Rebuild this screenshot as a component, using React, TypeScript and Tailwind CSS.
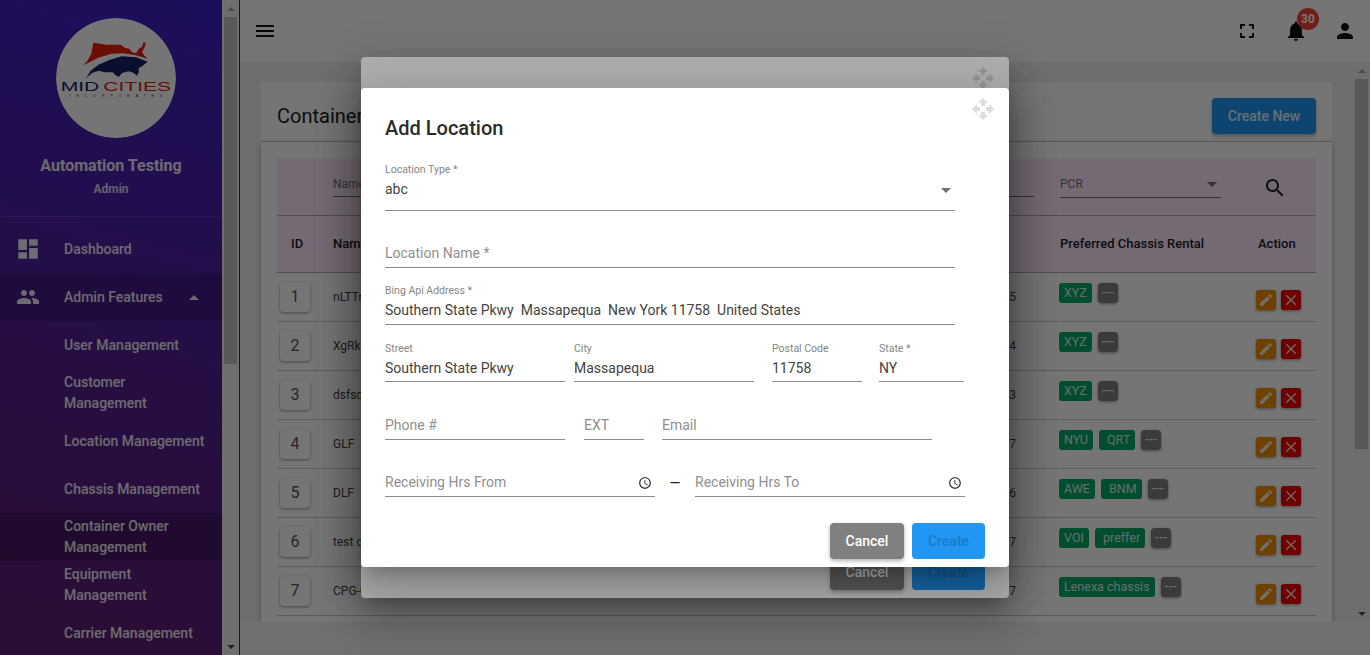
import type { ReactNode } from "react";

const icons = {
  menu: "M3 18h18v-2H3v2zm0-5h18v-2H3v2zm0-7v2h18V6H3z",
  fullscreen: "M7 14H5v5h5v-2H7v-3zm-2-4h2V7h3V5H5v5zm12 7h-3v2h5v-5h-2v3zM14 5v2h3v3h2V5h-5z",
  bell: "M12 22c1.1 0 2-.9 2-2h-4c0 1.1.89 2 2 2zm6-6v-5c0-3.07-1.64-5.64-4.5-6.32V4c0-.83-.67-1.5-1.5-1.5s-1.5.67-1.5 1.5v.68C7.63 5.36 6 7.92 6 11v5l-2 2v1h16v-1l-2-2z",
  person: "M12 12c2.21 0 4-1.79 4-4s-1.79-4-4-4-4 1.79-4 4 1.79 4 4 4zm0 2c-2.67 0-8 1.34-8 4v2h16v-2c0-2.66-5.33-4-8-4z",
  dashboard: "M3 13h8V3H3v10zm0 8h8v-6H3v6zm10 0h8V11h-8v10zm0-18v6h8V3h-8z",
  people: "M16 11c1.66 0 2.99-1.34 2.99-3S17.66 5 16 5c-1.66 0-3 1.34-3 3s1.34 3 3 3zm-8 0c1.66 0 2.99-1.34 2.99-3S9.66 5 8 5C6.34 5 5 6.34 5 8s1.34 3 3 3zm0 2c-2.33 0-7 1.17-7 3.5V19h14v-2.5c0-2.33-4.67-3.5-7-3.5zm8 0c-.29 0-.62.02-.97.05 1.16.84 1.97 1.97 1.97 3.45V19h6v-2.5c0-2.33-4.67-3.5-7-3.5z",
  search: "M15.5 14h-.79l-.28-.27C15.41 12.59 16 11.11 16 9.5 16 5.91 13.09 3 9.5 3S3 5.91 3 9.5 5.91 16 9.5 16c1.61 0 3.09-.59 4.23-1.57l.27.28v.79l5 4.99L20.49 19l-4.99-5zm-6 0C7.01 14 5 11.99 5 9.5S7.01 5 9.5 5 14 7.01 14 9.5 11.99 14 9.5 14z",
  edit: "M3 17.25V21h3.75L17.81 9.94l-3.75-3.75L3 17.25zM20.71 7.04c.39-.39.39-1.02 0-1.41l-2.34-2.34c-.39-.39-1.02-.39-1.41 0l-1.83 1.83 3.75 3.75 1.83-1.83z",
  close: "M19 6.41L17.59 5 12 10.59 6.41 5 5 6.41 10.59 12 5 17.59 6.41 19 12 13.41 17.59 19 19 17.59 13.41 12z",
  clock: "M11.99 2C6.47 2 2 6.48 2 12s4.47 10 9.99 10C17.52 22 22 17.52 22 12S17.52 2 11.99 2zM12 20c-4.42 0-8-3.58-8-8s3.58-8 8-8 8 3.58 8 8-3.58 8-8 8zm.5-13H11v6l5.25 3.15.75-1.23-4.5-2.67z",
  move: "M10 9h4V6h3l-5-5-5 5h3v3zm-1 1H6V7l-5 5 5 5v-3h3v-4zm14 2l-5-5v3h-3v4h3v3l5-5zm-9 3h-4v3H7l5 5 5-5h-3v-3z",
};

function Icon({ name, className }: { name: keyof typeof icons; className?: string }) {
  return (
    <svg viewBox="0 0 24 24" className={className} fill="currentColor">
      <path d={icons[name]} />
    </svg>
  );
}

function Logo() {
  return (
    <svg viewBox="78 25 360 360" className="h-[120px] w-[120px]">
      <circle cx="258" cy="205" r="180" fill="#fff" />
      <path
        d="M190 99 L230 105 L272 105 L284 114 L298 117 L306 128 L318 131 L328 116 L336 112 L341 97 L347 100 L344 112 L336 128 L342 136 L353 147 L318 137 L280 131 L245 132 L205 144 L160 167 L172 153 L184 132 Z"
        fill="#e8200f"
      />
      <path
        d="M353 156 L318 143 L275 140 L240 150 L205 165 L182 183 L168 206 L186 190 L206 183 L224 188 L248 188 L256 196 L266 202 L276 190 L296 185 L312 190 L320 198 L326 190 L326 176 L338 168 Z"
        fill="#1a2368"
      />
      <text x="92" y="243" fontFamily="'Liberation Sans', sans-serif" fontSize="40" textLength="116" lengthAdjust="spacingAndGlyphs" fill="#1a2368">
        MID
      </text>
      <text x="220" y="243" fontFamily="'Liberation Sans', sans-serif" fontSize="40" textLength="203" lengthAdjust="spacingAndGlyphs" fill="#e8200f">
        CITIES
      </text>
      <text x="118" y="261" fontFamily="'Liberation Sans', sans-serif" fontSize="12" textLength="280" fill="#444">
        INCORPORATED
      </text>
    </svg>
  );
}

function NavItem({ children, active }: { children: ReactNode; active?: boolean }) {
  return (
    <div className={`flex h-12 shrink-0 items-center pl-16 pr-4 text-sm font-medium leading-[21px] text-white/90 ${active ? "bg-black/20" : ""}`}>
      <span>{children}</span>
    </div>
  );
}

function Sidebar() {
  return (
    <aside className="flex h-full w-[222px] shrink-0 flex-col overflow-hidden bg-[linear-gradient(15deg,#5e1f70_0%,#561f90_40%,#4120c8_100%)]">
      <div className="flex h-[217px] shrink-0 flex-col items-center border-b border-white/10 pt-[18px]">
        <div className="ml-[10px] overflow-hidden rounded-full">
          <Logo />
        </div>
        <div className="mt-[17px] text-base font-bold leading-[22px] text-white/90">Automation Testing</div>
        <div className="mt-[4px] text-xs font-bold leading-4 text-white/80">Admin</div>
      </div>
      <div className="flex h-[56px] shrink-0 items-center pl-[15px] pt-2 text-sm font-medium text-white/90">
        <Icon name="dashboard" className="h-[26px] w-[26px]" />
        <span className="ml-[23px]">Dashboard</span>
      </div>
      <div className="flex h-12 shrink-0 items-center bg-black/15 pl-4 text-sm font-medium text-white/90">
        <Icon name="people" className="h-6 w-6" />
        <span className="ml-6">Admin Features</span>
        <span className="ml-[26px] h-0 w-0 border-x-[5px] border-b-[5px] border-x-transparent border-b-white/90" />
      </div>
      <NavItem>User Management</NavItem>
      <NavItem>Customer Management</NavItem>
      <NavItem>Location Management</NavItem>
      <NavItem>Chassis Management</NavItem>
      <NavItem active>Container Owner Management</NavItem>
      <NavItem>Equipment Management</NavItem>
      <NavItem>Carrier Management</NavItem>
    </aside>
  );
}

function Scrollbar({ thumb }: { thumb: string }) {
  return (
    <div className="flex h-full w-[17px] shrink-0 flex-col bg-[#f1f1f1]">
      <div className="flex h-[17px] shrink-0 items-center justify-center">
        <span className="h-0 w-0 border-x-[4px] border-b-[4px] border-x-transparent border-b-[#a3a3a3]" />
      </div>
      <div className={`mx-[2px] shrink-0 bg-[#c1c1c1] ${thumb}`} />
      <div className="flex-1" />
      <div className="flex h-[17px] shrink-0 items-center justify-center">
        <span className="h-0 w-0 border-x-[4px] border-t-[4px] border-x-transparent border-t-[#505050]" />
      </div>
    </div>
  );
}

function Tag({ children }: { children: ReactNode }) {
  return (
    <span className="flex h-5 items-center whitespace-pre rounded-[3px] bg-[#00a86b] px-[5px] text-[12.5px] text-white/85">
      {children}
    </span>
  );
}

const rows = [
  { id: 1, name: "nLTTrq", code: "10025", tags: ["XYZ"] },
  { id: 2, name: "XgRkmz", code: "10024", tags: ["XYZ"] },
  { id: 3, name: "dsfsdf", code: "10023", tags: ["XYZ"] },
  { id: 4, name: "GLF", code: "10017", tags: ["NYU", "\u00a0QRT"] },
  { id: 5, name: "DLF", code: "10016", tags: ["AWE", "\u00a0BNM"] },
  { id: 6, name: "test chassis", code: "10007", tags: ["VOI", "\u00a0preffer"] },
  { id: 7, name: "CPG-Chicago", code: "10007", tags: ["Lenexa chassis"] },
];

const columns = "grid grid-cols-[56px_300px_383px_224px_76px]";

function Table() {
  return (
    <div className="flex-1 bg-white px-4 pt-[17px] shadow-[0_2px_6px_rgba(0,0,0,0.25)]">
      <div className="bg-[#fbe6fd]">
        <div className="flex h-[57px] items-start border-b border-[#b9a9bb] pl-14 pt-4">
          <div className="h-[22px] w-[220px] border-b border-[#7b6a7d] text-xs leading-[18px] text-[#7b6f7d]">Name</div>
          <div className="ml-[261px] h-[22px] w-[220px] border-b border-[#7b6a7d]" />
          <div className="ml-[26px] flex h-[23px] w-[161px] items-center justify-between border-b border-[#7b6a7d] pb-1 pr-[4px] text-xs text-[#7b6f7d]">
            <span>PCR</span>
            <span className="h-0 w-0 border-x-[5px] border-t-[5px] border-x-transparent border-t-[#6f6f6f]" />
          </div>
          <Icon name="search" className="ml-[42px] mt-px h-6 w-6 text-[#222]" />
        </div>
        <div className={`${columns} h-[57px] items-center border-b border-[#b9a9bb] text-[13px] font-medium text-[#1f1f1f]`}>
          <span className="pl-[14px]">ID</span>
          <span>Name</span>
          <span>Code</span>
          <span className="pl-[44px]">Preferred Chassis Rental</span>
          <span className="pl-[18px]">Action</span>
        </div>
      </div>
      {rows.map((row) => (
        <div key={row.id} className={`${columns} h-[49px] border-b border-[#c9c9c9] text-xs text-[#444]`}>
          <div className="pl-[3px] pt-[9px]">
            <span className="flex h-[30px] w-[30px] items-center justify-center rounded bg-white text-base text-[#555] shadow-[0_1px_3px_rgba(0,0,0,0.4)]">
              {row.id}
            </span>
          </div>
          <div className="flex items-center">{row.name}</div>
          <div className="flex items-center justify-end">{row.code}</div>
          <div className="flex gap-[6px] pl-[43px] pt-[10px]">
            {row.tags.map((tag) => (
              <Tag key={tag}>{tag}</Tag>
            ))}
            <span className="flex h-5 w-5 items-center justify-center rounded-[4px] bg-[#808080] text-xs font-medium text-white/85 shadow-[0_1px_3px_rgba(0,0,0,0.4)]">
              ---
            </span>
          </div>
          <div className="flex gap-[5px] pl-4 pt-[17px]">
            <span className="flex h-5 w-5 items-center justify-center rounded-[3px] bg-[#f09000] text-white/85 shadow-[0_1px_3px_rgba(0,0,0,0.4)]">
              <Icon name="edit" className="h-4 w-4" />
            </span>
            <span className="flex h-5 w-5 items-center justify-center rounded-[3px] bg-[#f00000] text-white/85 shadow-[0_1px_3px_rgba(0,0,0,0.4)]">
              <Icon name="close" className="h-[18px] w-[18px]" />
            </span>
          </div>
        </div>
      ))}
    </div>
  );
}

function Field({ label, value, width, height = "h-[42px]", icon }: { label: string; value?: string; width: string; height?: string; icon?: ReactNode }) {
  return (
    <div className={`shrink-0 border-b border-[#8c8c8c] ${width} ${height}`}>
      <div className="h-[15px] pt-px text-[10.5px] leading-[14px] text-[#858585]">{value ? label : ""}</div>
      <div className={`flex h-[23px] items-center justify-between whitespace-pre text-sm ${value ? "text-[#444]" : "text-[#8f8f8f]"}`}>
        <span>{value ?? label}</span>
        {icon}
      </div>
    </div>
  );
}

function Clock() {
  return <Icon name="clock" className="mr-[3px] mt-[2px] h-[14px] w-[14px] text-[#222]" />;
}

function DialogButtons() {
  return (
    <div className="flex justify-end gap-2 pb-2 pr-6">
      <button className="h-9 w-[74px] rounded bg-[#808080] text-sm font-medium text-white shadow-[0_2px_4px_rgba(0,0,0,0.3)]">Cancel</button>
      <button className="h-9 w-[73px] rounded bg-[#2196f3] text-sm font-medium text-[#1a7cc8]">Create</button>
    </div>
  );
}

const dialogShadow = "shadow-[0_11px_15px_-7px_rgba(0,0,0,0.2),0_24px_38px_3px_rgba(0,0,0,0.14),0_9px_46px_8px_rgba(0,0,0,0.12)]";

function MoveHandle() {
  return <Icon name="move" className="absolute right-[14px] top-[9px] h-6 w-6 text-[#dcdcdc]" />;
}

export default function App() {
  return (
    <div className="relative flex h-[655px] w-[1370px] overflow-hidden bg-[#eef0f3] font-['Roboto',sans-serif]">
      <Sidebar />
      <div className="border-r border-[#333]">
        <Scrollbar thumb="h-[347px]" />
      </div>

      <div className="flex min-w-0 flex-1 flex-col">
        <header className="flex h-[62px] shrink-0 items-center bg-white pl-[13px] text-[#111]">
          <Icon name="menu" className="h-6 w-6" />
          <div className="flex-1" />
          <Icon name="fullscreen" className="h-6 w-6" />
          <div className="relative ml-[25px]">
            <Icon name="bell" className="h-6 w-6" />
            <span className="absolute left-[2px] top-[-22px] ml-[11px] mt-[11px] flex h-[22px] w-[22px] items-center justify-center rounded-full bg-[#f44336] text-xs font-bold text-white">
              30
            </span>
          </div>
          <Icon name="person" className="ml-[25px] mr-[13px] h-6 w-6" />
        </header>

        <div className="flex min-h-0 flex-1">
          <main className="flex min-w-0 flex-1 flex-col overflow-hidden px-[21px] pt-5">
            <div className="flex h-[60px] shrink-0 items-center justify-between border-b border-[#c9c9c9] bg-white px-4 pt-2">
              <h1 className="text-xl text-[#222]">Container Owner Management</h1>
              <button className="h-9 w-[104px] rounded bg-[#2196f3] text-sm font-medium text-white/85 shadow-[0_2px_4px_rgba(0,0,0,0.3)]">Create New</button>
            </div>
            <Table />
          </main>
          <Scrollbar thumb="h-[370px]" />
        </div>
        <div className="h-[33px] shrink-0 bg-[#f3f3f3]" />
      </div>

      <div className="absolute inset-0 bg-black/32" />
      <div className="absolute inset-0 flex items-center justify-center">
        <div className={`relative flex h-[541px] w-[648px] flex-col justify-end rounded bg-white ${dialogShadow}`}>
          <MoveHandle />
          <DialogButtons />
        </div>
      </div>

      <div className="absolute inset-0 bg-black/32" />
      <div className="absolute inset-0 flex items-center justify-center">
        <div className={`relative h-[479px] w-[648px] rounded bg-white ${dialogShadow}`}>
          <MoveHandle />
          <div className="flex flex-col gap-[15px] px-6 pt-6">
            <h2 className="mb-[3px] h-8 text-xl font-medium leading-8 text-[#2b2b2b]">Add Location</h2>
            <Field
              label="Location Type *"
              value="abc"
              width="w-[570px]"
              height="h-[49px]"
              icon={<span className="mr-[4px] mt-[3px] h-0 w-0 border-x-[5px] border-t-[5px] border-x-transparent border-t-[#6f6f6f]" />}
            />
            <Field label="Location Name *" width="w-[570px]" />
            <Field label="Bing Api Address *" value="Southern State Pkwy  Massapequa  New York 11758  United States" width="w-[570px]" />
            <div className="flex pt-px">
              <Field label="Street" value="Southern State Pkwy" width="w-[180px]" height="h-[41px]" />
              <div className="ml-[9px]"><Field label="City" value="Massapequa" width="w-[180px]" height="h-[41px]" /></div>
              <div className="ml-[18px]"><Field label="Postal Code" value="11758" width="w-[90px]" height="h-[41px]" /></div>
              <div className="ml-[17px]"><Field label="State *" value="NY" width="w-[85px]" height="h-[41px]" /></div>
            </div>
            <div className="flex pt-px">
              <Field label="Phone #" width="w-[180px]" />
              <div className="ml-[19px]"><Field label="EXT" width="w-[60px]" /></div>
              <div className="ml-[18px]"><Field label="Email" width="w-[270px]" /></div>
            </div>
            <div className="flex items-center">
              <Field label="Receiving Hrs From" width="w-[270px]" icon={<Clock />} />
              <span className="w-10 pt-[13px] text-center text-sm text-[#222]">—</span>
              <Field label="Receiving Hrs To" width="w-[270px]" icon={<Clock />} />
            </div>
          </div>
          <div className="absolute inset-x-0 bottom-0">
            <DialogButtons />
          </div>
        </div>
      </div>
    </div>
  );
}
